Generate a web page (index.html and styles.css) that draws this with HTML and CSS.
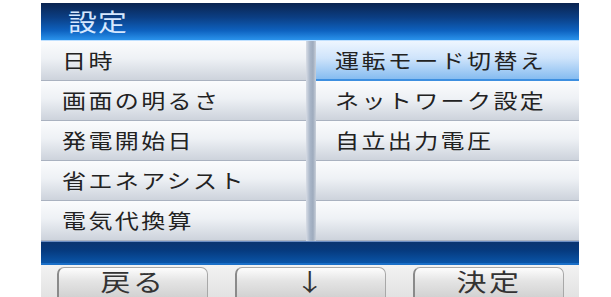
FILE: index.html
```html
<!DOCTYPE html>
<html lang="ja">
    <head>
        <meta charset="UTF-8">
        <title>設定</title>
        <link rel="stylesheet" href="styles.css">
    </head>
    <body>
        <div class="screen">
            <div class="title"><span>設定</span></div>
            <div class="menu">
                <ul class="col left">
                    <li><span>日時</span></li>
                    <li><span>画面の明るさ</span></li>
                    <li><span>発電開始日</span></li>
                    <li><span>省エネアシスト</span></li>
                    <li><span>電気代換算</span></li>
                </ul>
                <div class="divider"></div>
                <ul class="col right">
                    <li class="selected"><span>運転モード切替え</span></li>
                    <li><span>ネットワーク設定</span></li>
                    <li><span>自立出力電圧</span></li>
                    <li></li>
                    <li></li>
                </ul>
            </div>
            <div class="bar"></div>
            <div class="keys">
                <div class="key"><span>戻る</span></div>
                <div class="key"><span>↓</span></div>
                <div class="key"><span>決定</span></div>
            </div>
        </div>
    </body>
</html>
```

FILE: styles.css
```css
body{margin:0;background:white;font-family:"Noto Sans CJK JP","Noto Sans",sans-serif;overflow:hidden;}
.screen{width:538px;margin:3px 0 0 41px;}
/* 液晶の文字は横に少し伸びている */
.title span,.col span,.key span{display:inline-block;transform-origin:left center;}
/* 上のタイトル */
.title{height:38px;box-sizing:border-box;padding-left:27px;font-size:24px;line-height:36px;letter-spacing:1px;color:#d6e8ff;
  background:linear-gradient(#0a2450 0%,#0b3f85 40%,#0e62c0 75%,#2a93ec 100%);border-bottom:1px solid #bfe0ff;}
.title span{transform:scaleX(1.2);}
.menu{display:grid;grid-template-columns:265px 10px 263px;}
.col{list-style:none;margin:0;padding:0;}
.col li{height:40px;box-sizing:border-box;font-size:20px;line-height:40px;letter-spacing:2px;color:#222;white-space:nowrap;
  background:linear-gradient(#fbfcfd 0%,#eef1f5 45%,#cdd3dc 100%);border-bottom:1px solid #aab2c0;}
.col span{transform:scaleX(1.2);}
.left li{padding-left:21px;}
.right li{padding-left:19px;}
/* 選択中の行 */
.right li.selected{background:linear-gradient(#eef6ff 0%,#cfe4fb 45%,#86bcf0 100%);border-bottom:2px solid #3d8fe0;}
.divider{background:linear-gradient(90deg,#d8dde6 0%,#a9b6c8 40%,#9eabbd 70%,#c9d0da 100%);}
/* 下の青いバー */
.bar{height:24px;box-sizing:border-box;background:linear-gradient(#0a3470 0%,#063a7e 40%,#0a55a8 100%);
  border-top:1px solid #6d8fc4;border-bottom:2px solid #1a6fc8;}
.keys{height:32px;display:flex;gap:27px;padding:2px 0 0 16px;box-sizing:border-box;
  background:linear-gradient(#f2f2f2 0%,#e2e2e2 100%);}
.key{width:151px;height:30px;box-sizing:border-box;text-align:center;font-size:24px;line-height:26px;color:#333;
  border:1px solid #a8a8a8;border-bottom:none;border-left:2px solid #8a8a8a;border-radius:7px 7px 0 0;
  background:linear-gradient(#fdfdfd 0%,#e4e4e4 45%,#d2d2d2 100%);}
.key span{letter-spacing:2px;transform:scaleX(1.25);transform-origin:center;}
```
